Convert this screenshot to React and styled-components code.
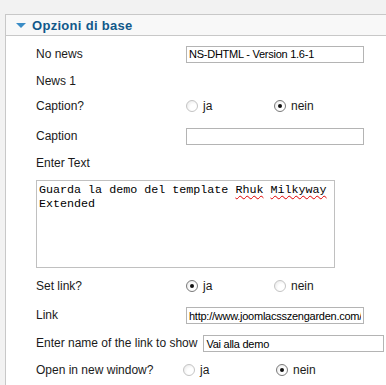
import React from "react";
import styled, { createGlobalStyle } from "styled-components";

const GlobalStyle = createGlobalStyle`
  html, body {
    margin: 0;
    padding: 0;
    background: #f2f2f2;
    overflow: hidden;
  }
  body {
    font-family: "Liberation Sans", Arial, sans-serif;
    font-size: 12px;
    color: #1a1a1a;
  }
`;

const Page = styled.div`
  padding: 14px 0 0 5px;
  overflow: hidden;
`;

const Panel = styled.div`
  border: 1px solid #c8c8c8;
  border-right: none;
  background: #fff;
  min-height: 380px;
`;

const Header = styled.div`
  height: 20px;
  background: #f8f8f8;
  border-bottom: 1px solid #c8c8c8;
  display: flex;
  align-items: center;
  padding-left: 10px;
  gap: 6px;
`;

const Arrow = styled.span`
  width: 0;
  height: 0;
  border-left: 5px solid transparent;
  border-right: 5px solid transparent;
  border-top: 5px solid #3a8cc6;
  margin-top: 1px;
`;

const Title = styled.h3`
  margin: 0;
  font-size: 13px;
  font-weight: bold;
  color: #11588a;
  letter-spacing: 0.3px;
`;

const Body = styled.div`
  padding: 5px 0 0 30px;
  display: flex;
  flex-direction: column;
`;

const Row = styled.div`
  display: flex;
  align-items: center;
  height: ${(p) => p.h}px;
`;

const Label = styled.span`
  flex: 0 0 auto;
  width: ${(p) => (p.w ? `${p.w}px` : "auto")};
  margin-right: ${(p) => p.gap || 0}px;
  white-space: nowrap;
`;

const TextInput = styled.input`
  box-sizing: border-box;
  flex: 0 0 auto;
  width: ${(p) => p.w}px;
  height: 17px;
  margin: ${(p) => (p.dy ? `${p.dy}px 0 0` : 0)};
  border: 1px solid #b4b4b4;
  padding: 0 2px;
  font-family: "Liberation Sans", Arial, sans-serif;
  font-size: 11px;
  letter-spacing: -0.25px;
  color: #000;
  background: #fff;
  outline: none;
`;

const Options = styled.div`
  display: flex;
  align-items: center;
`;

const Option = styled.label`
  display: inline-flex;
  align-items: center;
  width: ${(p) => p.w}px;
  gap: 5px;
`;

const Radio = styled.span`
  box-sizing: border-box;
  width: 12px;
  height: 12px;
  border-radius: 50%;
  border: 1px solid ${(p) => (p.checked ? "#7a7a7a" : "#c4c4c4")};
  background: radial-gradient(circle at 65% 65%, #ffffff 35%, #e4e4e4 100%);
  display: flex;
  align-items: center;
  justify-content: center;
  &::after {
    content: "";
    width: 4px;
    height: 4px;
    border-radius: 50%;
    background: ${(p) => (p.checked ? "#111" : "transparent")};
  }
`;

const TextArea = styled.div`
  box-sizing: border-box;
  width: 299px;
  height: 88px;
  margin-top: 8px;
  border: 1px solid #c0c0c0;
  padding: 2px 2px;
  font-family: "Liberation Mono", "Courier New", monospace;
  font-size: 11.7px;
  line-height: 14px;
  color: #000;
  white-space: pre-wrap;
`;

const Misspelled = styled.span`
  text-decoration: underline wavy #e00000;
  text-decoration-thickness: 1px;
  text-underline-offset: 2px;
`;

const heights = {
  "Caption?": 23,
  "Set link?": 36,
  "Open in new window?": 19,
};

const RadioRow = ({ label, value, w = 150, first = 88 }) => (
  <Row h={heights[label] || 24}>
    <Label w={w}>{label}</Label>
    <Options>
      <Option w={first}>
        <Radio checked={value === "ja"} />
        ja
      </Option>
      <Option w={60}>
        <Radio checked={value === "nein"} />
        nein
      </Option>
    </Options>
  </Row>
);

export default function App() {
  return (
    <Page>
      <GlobalStyle />
      <Panel>
        <Header>
          <Arrow />
          <Title>Opzioni di base</Title>
        </Header>
        <Body>
          <Row h={26}>
            <Label w={150}>No news</Label>
            <TextInput w={178} defaultValue="NS-DHTML - Version 1.6-1" />
          </Row>
          <Row h={27}>
            <Label w={150}>News 1</Label>
          </Row>
          <RadioRow label="Caption?" value="nein" />
          <Row h={37}>
            <Label w={150}>Caption</Label>
            <TextInput w={178} defaultValue="" dy={1} />
          </Row>
          <Row h={18}>
            <Label>Enter Text</Label>
          </Row>
          <TextArea>
            {"Guarda la demo del template "}
            <Misspelled>Rhuk</Misspelled> <Misspelled>Milkyway</Misspelled>
            {"\nExtended"}
          </TextArea>
          <RadioRow label="Set link?" value="ja" />
          <Row h={22}>
            <Label w={150}>Link</Label>
            <TextInput
              w={178}
              dy={1}
              defaultValue="http://www.joomlacsszengarden.com/j"
            />
          </Row>
          <Row h={34}>
            <Label gap={6}>Enter name of the link to show</Label>
            <TextInput w={181} dy={1} defaultValue="Vai alla demo" />
          </Row>
          <RadioRow
            label="Open in new window?"
            value="nein"
            w={147}
            first={93}
          />
        </Body>
      </Panel>
    </Page>
  );
}
